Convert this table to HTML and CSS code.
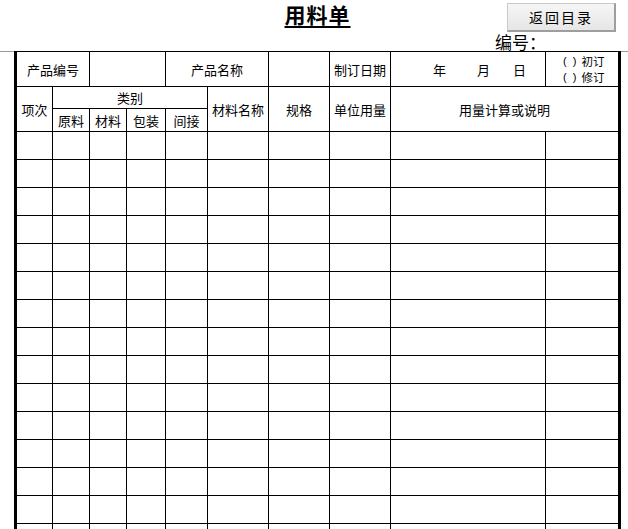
FILE: index.html
```html
<!DOCTYPE html>
<html lang="zh-CN">
<head>
<meta charset="utf-8">
<title>用料单</title>
<link rel="stylesheet" href="styles.css">
</head>
<body>
<header class="header">
  <div class="header-inner">
    <h1 class="title">用料单</h1>
    <div class="header-side">
      <button class="back-btn" type="button">返回目录</button>
      <div class="serial">编号：</div>
    </div>
  </div>
</header>
<main class="sheet">
  <div class="cell c-span2">产品编号</div>
  <div class="cell c-span2"></div>
  <div class="cell c-span2">产品名称</div>
  <div class="cell"></div>
  <div class="cell">制订日期</div>
  <div class="cell date"><span>年</span><span class="m">月</span><span class="d">日</span></div>
  <div class="cell revise">
    <div class="rv-line"><span class="paren">(&nbsp;&nbsp;)</span><span>初订</span></div>
    <div class="rv-line"><span class="paren">(&nbsp;&nbsp;)</span><span>修订</span></div>
  </div>

  <div class="cell r-span2">项次</div>
  <div class="cell c-span4">类别</div>
  <div class="cell r-span2">材料名称</div>
  <div class="cell r-span2">规格</div>
  <div class="cell r-span2">单位用量</div>
  <div class="cell r-span2 c-span2">用量计算或说明</div>
  <div class="cell">原料</div>
  <div class="cell">材料</div>
  <div class="cell">包装</div>
  <div class="cell">间接</div>
</main>
<script>
(function(){
  var sheet = document.querySelector('.sheet');
  for (var r = 0; r < 15; r++) {
    for (var c = 0; c < 10; c++) {
      var d = document.createElement('div');
      d.className = 'cell';
      sheet.appendChild(d);
    }
  }
})();
</script>
</body>
</html>
```

FILE: styles.css
```css
html, body {
  margin: 0;
  padding: 0;
  background: #fff;
}
body {
  font-family: "Noto Sans CJK SC", "Liberation Sans", sans-serif;
  color: #000;
}
.header {
  height: 51px;
  border-bottom: 1px solid #9a9a9a;
}
.header-inner {
  width: 607px;
  height: 51px;
  margin-left: 14px;
  display: grid;
  grid-template-columns: 1fr auto 1fr;
}
.title {
  grid-column: 2;
  margin: 0;
  padding-top: 1px;
  font-size: 21px;
  line-height: 26px;
  font-weight: 700;
  text-decoration: underline;
  text-underline-offset: 3px;
  letter-spacing: 1px;
}
.header-side {
  grid-column: 3;
  display: flex;
  flex-direction: column;
  align-items: flex-end;
}
.back-btn {
  margin: 3px 5px 0 0;
  width: 109px;
  height: 29px;
  padding: 0;
  font-family: inherit;
  font-size: 14px;
  letter-spacing: 2px;
  color: #000;
  background: linear-gradient(#f6f6f6, #e6e6e6);
  border: 1px solid #c9c9c9;
  border-right: 2px solid #9e9e9e;
  border-bottom: 2px solid #9e9e9e;
  border-radius: 0;
}
.serial {
  margin-right: 75px;
  font-size: 17px;
  line-height: 20px;
  width: 51px;
}
.sheet {
  position: relative;
  margin: -1px 0 0 14px;
  width: 607px;
  box-sizing: border-box;
  border-top: 1px solid #000;
  border-left: 3px solid #000;
  border-right: 2px solid #000;
  display: grid;
  grid-template-columns: 36px 37px 37px 39px 42px 61px 61px 61px 155px 73px;
  grid-template-rows: 35px 22px 23px;
  grid-auto-rows: 28px;
}
.cell {
  box-sizing: border-box;
  border-right: 1px solid #000;
  border-bottom: 1px solid #000;
  display: flex;
  align-items: center;
  justify-content: center;
  font-size: 13px;
  line-height: 15px;
  white-space: nowrap;
}
.c-span2 { grid-column: span 2; }
.c-span4 { grid-column: span 4; }
.r-span2 { grid-row: span 2; }
.date {
  justify-content: flex-start;
  padding-left: 42px;
}
.date .m { margin-left: 31px; }
.date .d { margin-left: 23px; }
.revise {
  flex-direction: column;
  align-items: flex-start;
  justify-content: center;
  padding-left: 17px;
}
.rv-line {
  display: flex;
  align-items: center;
  gap: 5px;
  height: 16.5px;
  font-size: 11.5px;
  line-height: 16.5px;
}
.paren {
  font-family: "Liberation Sans", sans-serif;
  font-size: 11px;
}
```
